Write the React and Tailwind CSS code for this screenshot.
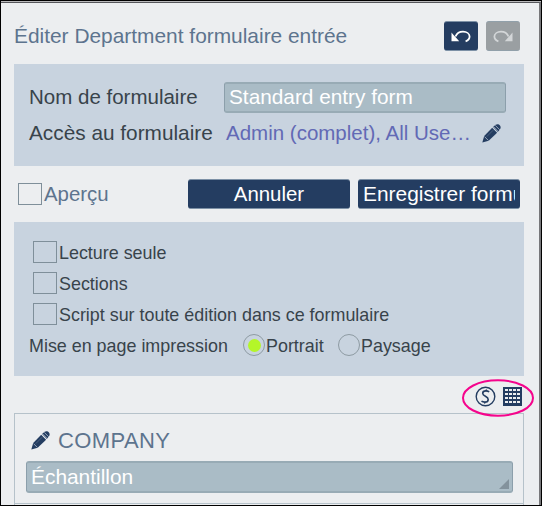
const UndoIcon = ({ className }) => (
  <svg width="20" height="13" viewBox="0 0 20 13" fill="none" className={className}>
    <path d="M4.5 6.5C6 3 8.8 1.7 12 1.7C15.8 1.7 18.6 3.8 18.6 6.6C18.6 8.9 17.2 10.5 14.6 11.4" stroke="currentColor" strokeWidth="1.8" />
    <path d="M0.5 2.5V11.2H8.2L5.8 8.6L3 5.6Z" fill="currentColor" />
  </svg>
);

const PencilIcon = () => (
  <svg width="19" height="19" viewBox="0 0 19 19" className="shrink-0 text-[#243d61]">
    <path d="M0.3 18.6L2.2 12.1L10.2 3.8L15.1 8.7L6.7 16.7Z" fill="currentColor" />
    <path d="M11 3L13.6 0.8C15.1 -0.3 17 0.2 18 1.4C19 2.7 18.8 4.3 17.8 5.4L15.8 7.9Z" fill="currentColor" />
    <path d="M2.5 12.6L6.3 16.4M11.5 2.8L16.2 7.5M13.2 1.3L17.7 5.8" stroke="#c8d3df" strokeWidth="0.7" />
    <path d="M4.7 12.7L11.2 6.2" stroke="#8795a8" strokeWidth="0.4" />
  </svg>
);

const DollarIcon = () => (
  <svg width="21" height="21" viewBox="0 0 21 21" fill="none" stroke="#243d61">
    <circle cx="10.5" cy="10.5" r="9.3" strokeWidth="1.4" />
    <path d="M14.2 5.9C13 5.1 12 4.9 10.9 4.9C8.9 4.9 7.7 5.9 7.7 7.3C7.7 10.6 13.2 10 13.2 13.4C13.2 15.2 11.7 16.1 9.8 16.1C8.5 16.1 7.3 15.8 6.5 15.2" strokeWidth="1.6" />
    <path d="M11.4 3.4L11.1 5M9.9 16L9.6 17.6" strokeWidth="1.2" />
  </svg>
);

const GridIcon = () => (
  <svg width="19" height="19" viewBox="0 0 19 19" shapeRendering="crispEdges">
    <rect width="19" height="19" fill="#243d61" />
    {[2, 6, 10, 14].map((y) =>
      [2, 6, 10, 14].map((x) => (
        <rect key={`${x}-${y}`} x={x} y={y} width="3" height="2" fill="#eceef0" />
      ))
    )}
  </svg>
);

const OPTIONS = ["Lecture seule", "Sections", "Script sur toute édition dans ce formulaire"];

function Checkbox() {
  return <span className="h-[22px] w-6 shrink-0 border border-[#7f8f9a]" />;
}

function Radio({ label, checked }) {
  return (
    <div className="flex items-center">
      <span className="flex size-[22px] items-center justify-center rounded-full border border-[#8e9ba3]">
        {checked && <span className="size-[13px] rounded-full bg-[#b4f629]" />}
      </span>
      <span className="ml-px pt-[2px]">{label}</span>
    </div>
  );
}

export default function App() {
  return (
    <div className="h-[506px] w-[542px] overflow-hidden border border-black bg-[#b9b9bb] pt-px font-['Liberation_Sans',Arial,sans-serif] whitespace-nowrap">
      <div className="h-[503px] border-t border-r-2 border-t-[#55565a] border-r-[#77777a] bg-[#eceef0] pl-[13px]">
        {/* Title bar */}
        <header className="flex h-[61px] w-[510px] items-start justify-between pt-[18px] pr-1">
          <h1 className="text-[20.9px] leading-[30px] text-[#5d748e]">Éditer Department formulaire entrée</h1>
          <div className="flex gap-2">
            <button className="flex h-[30px] w-[34px] items-center justify-center rounded-[3px] border-y border-[#7d91a6] bg-[#243d61]">
              <UndoIcon className="text-white" />
            </button>
            <button className="flex h-[30px] w-[34px] items-center justify-center rounded-[3px] border-y border-[#91a0aa] bg-[#9a9fa2]">
              <UndoIcon className="-scale-x-100 text-[#d3d6d8]" />
            </button>
          </div>
        </header>

        {/* Form name and access */}
        <section className="h-[102px] w-[510px] bg-[#c8d3df] pt-[18px] pl-[15px] text-[20.5px] text-[#38434b]">
          <div className="flex h-[31px] items-center">
            <span className="w-[195px]">Nom de formulaire</span>
            <div className="h-[31px] w-[282px] rounded-[3px] border border-[#8c9fab] border-t-2 border-b-2 border-y-[#98abb5] bg-[#aabcc6] pl-1 text-[20.8px] leading-[25px] text-white">
              Standard entry form
            </div>
          </div>
          <div className="mt-[5px] flex h-[31px] items-center">
            <span className="w-[197px] pb-[2px] text-[20.8px]">Accès au formulaire</span>
            <span className="w-[256px] text-[#6269b5]">Admin (complet), All Use…</span>
            <PencilIcon />
          </div>
        </section>

        {/* Actions */}
        <div className="flex h-[56px] w-[510px] items-start pt-[13px] text-[20.4px]">
          <div className="flex h-[30px] w-[174px] items-center pl-1 text-[#5d748e]">
            <Checkbox />
            <span className="ml-[2px]">Aperçu</span>
          </div>
          <button className="h-[30px] w-[162px] rounded-[3px] border-y border-[#7d91a6] bg-[#243d61] leading-[28px] text-white">
            Annuler
          </button>
          <button className="ml-2 h-[30px] w-[162px] rounded-[3px] border-y border-[#7d91a6] bg-[#243d61] px-[5px] text-left text-[20.9px] leading-[28px] text-white">
            <span className="block overflow-hidden">Enregistrer formulaire</span>
          </button>
        </div>

        {/* Form options */}
        <section className="h-[154px] w-[510px] bg-[#c8d3df] pt-[19px] text-[17.9px] text-[#38434b]">
          <div className="flex flex-col gap-[9px] pl-[19px]">
            {OPTIONS.map((label) => (
              <div key={label} className="flex h-[22px] items-center">
                <Checkbox />
                <span className="ml-[2px] pt-[2px]">{label}</span>
              </div>
            ))}
          </div>
          <div className="mt-[9px] flex h-[22px] items-center pl-[15px]">
            <span className="w-[214px] pt-[2px]">Mise en page impression</span>
            <div className="w-[95px]">
              <Radio label="Portrait" checked />
            </div>
            <Radio label="Paysage" />
          </div>
        </section>

        {/* Script and grid shortcuts, circled */}
        <div className="relative flex h-[37px] w-[510px] items-start justify-end gap-[7px] pt-[10px] pr-[2px]">
          <DollarIcon />
          <div className="pt-[1px]">
            <GridIcon />
          </div>
          <svg width="74" height="40" viewBox="0 0 74 40" className="absolute top-[1.5px] left-[447px]">
            <ellipse cx="37" cy="20" rx="35" ry="17.7" fill="none" stroke="#f5048c" strokeWidth="2" />
          </svg>
        </div>

        {/* Field card */}
        <section className="h-[91px] w-[510px] border border-[#b6c2ca] pt-[13px] pl-[11px]">
          <div className="flex h-[26px] items-center pl-[5px]">
            <PencilIcon />
            <h2 className="ml-2 text-[22px] tracking-[0.4px] text-[#5d748e]">COMPANY</h2>
          </div>
          <div className="mt-[8px] flex h-8 w-[487px] items-end justify-between rounded-[3px] border border-[#8c9fab] border-t-2 border-b-2 border-y-[#98abb5] bg-[#aabcc6] pr-[3px] pl-1 text-[20.9px] leading-7 text-white">
            <span>Échantillon</span>
            <svg width="10" height="10" viewBox="0 0 10 10" className="mb-[2px]">
              <path d="M10 0V10H0Z" fill="#83929c" />
            </svg>
          </div>
        </section>
        <div className="h-px w-[510px] border-x border-[#b6c2ca]" />
      </div>
    </div>
  );
}
